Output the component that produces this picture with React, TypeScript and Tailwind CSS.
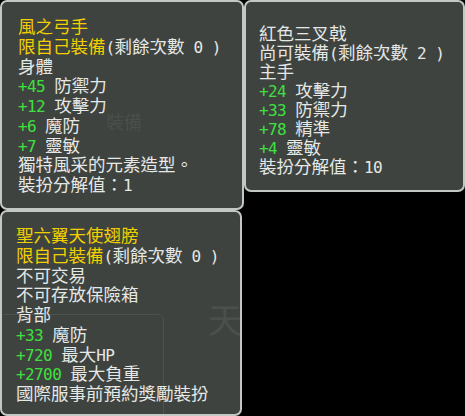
import type { ReactNode } from "react";

type Seg = { t: string; c?: "y" | "g" | "w" };
type Line = Seg[];

const COLOR = {
  y: "text-[#f2d000]",
  g: "text-[#3ee03e]",
  w: "text-[#e6e8e6]"
};

// ascii in the game font is half width, so render it in a mono font
function Segment({ seg }: { seg: Seg }) {
  const color = COLOR[seg.c ?? "w"];
  const parts = seg.t.split(/([\x20-\x7e]+)/).filter(Boolean);
  return (
    <span className={`${color} whitespace-pre`}>
      {parts.map((p, i) =>
        /^[\x20-\x7e]+$/.test(p) ? (
          <span
            key={i}
            className="font-['DejaVu_Sans_Mono',monospace] text-[16px] leading-none tracking-[-0.6px]"
          >
            {p}
          </span>
        ) : (
          <span key={i}>{p}</span>
        )
      )}
    </span>
  );
}

function Tooltip({
  lines,
  className,
  lineClass,
  ghost
}: {
  lines: Line[];
  className: string;
  lineClass: string;
  ghost?: ReactNode;
}) {
  return (
    <div
      className={`relative overflow-hidden rounded-[7px] border-2 border-[#c4c8c5] bg-[#3e433f] font-['Noto_Sans_CJK_TC',sans-serif] text-[17.5px] leading-none ${className}`}
    >
      {ghost}
      <div className="relative">
        {lines.map((line, i) => (
          <div key={i} className={`flex items-baseline whitespace-nowrap ${lineClass}`}>
            {line.map((seg, j) => (
              <Segment key={j} seg={seg} />
            ))}
          </div>
        ))}
      </div>
    </div>
  );
}

const windArcher: Line[] = [
  [{ t: "風之弓手", c: "y" }],
  [{ t: "限自己裝備", c: "y" }, { t: "(剩餘次數 0 )" }],
  [{ t: "身體" }],
  [{ t: "+45 ", c: "g" }, { t: "防禦力" }],
  [{ t: "+12 ", c: "g" }, { t: "攻擊力" }],
  [{ t: "+6 ", c: "g" }, { t: "魔防" }],
  [{ t: "+7 ", c: "g" }, { t: "靈敏" }],
  [{ t: "獨特風采的元素造型。" }],
  [{ t: "裝扮分解值：1" }]
];

const trident: Line[] = [
  [{ t: "紅色三叉戟" }],
  [{ t: "尚可裝備(剩餘次數 2 )" }],
  [{ t: "主手" }],
  [{ t: "+24 ", c: "g" }, { t: "攻擊力" }],
  [{ t: "+33 ", c: "g" }, { t: "防禦力" }],
  [{ t: "+78 ", c: "g" }, { t: "精準" }],
  [{ t: "+4 ", c: "g" }, { t: "靈敏" }],
  [{ t: "裝扮分解值：10" }]
];

const wings: Line[] = [
  [{ t: "聖六翼天使翅膀", c: "y" }],
  [{ t: "限自己裝備", c: "y" }, { t: "(剩餘次數 0 )" }],
  [{ t: "不可交易" }],
  [{ t: "不可存放保險箱" }],
  [{ t: "背部" }],
  [{ t: "+33 ", c: "g" }, { t: "魔防" }],
  [{ t: "+720 ", c: "g" }, { t: "最大HP" }],
  [{ t: "+2700 ", c: "g" }, { t: "最大負重" }],
  [{ t: "國際服事前預約獎勵裝扮" }]
];

export default function App() {
  return (
    <div className="flex h-[416px] w-[465px] overflow-hidden bg-black">
      <div className="flex w-[244px] flex-col">
        <Tooltip
          lines={windArcher}
          lineClass="h-[19.75px]"
          className="h-[210px] w-[244px] pl-[16px] pt-[15px]"
          ghost={
            <span className="absolute left-[104px] top-[110px] text-[18px] text-[#4a4f4b]">
              裝備
            </span>
          }
        />
        <Tooltip
          lines={wings}
          lineClass="h-[19.75px]"
          className="h-[206px] w-[242px] pl-[14px] pt-[14px]"
          ghost={
            <>
              <div className="absolute left-[-4px] top-[102px] h-[110px] w-[166px] rounded-[6px] border border-[#4d524e]" />
              <span className="absolute left-[206px] top-[90px] text-[34px] text-[#4b504c]">
                天
              </span>
            </>
          }
        />
      </div>
      <Tooltip
        lines={trident}
        lineClass="h-[19px]"
        className="h-[192px] flex-1 pl-[13px] pt-[22px]"
      />
    </div>
  );
}
